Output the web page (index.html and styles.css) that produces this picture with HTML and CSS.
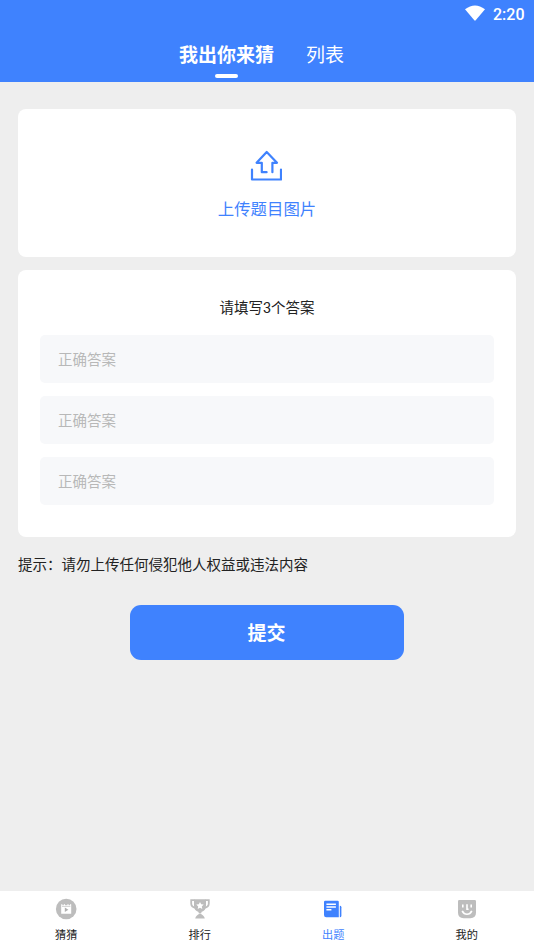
FILE: index.html
```html
<!DOCTYPE html>
<html lang="zh-CN">
<head>
<meta charset="utf-8">
<meta name="viewport" content="width=device-width, initial-scale=1">
<title>我出你来猜</title>
<link rel="stylesheet" href="styles.css">
</head>
<body>
<header class="header">
  <div class="status">
    <svg class="wifi" viewBox="0 0 20 16"><path d="M0 4.2Q10-3.4 20 4.2L10.7 15.3Q10 16 9.3 15.3Z" fill="#fff"/></svg>
    <span class="clock">2:20</span>
  </div>
  <nav class="tabs">
    <a class="tab tab-active">我出你来猜</a>
    <a class="tab">列表</a>
  </nav>
</header>
<main class="main">
  <section class="card upload">
    <svg class="upload-icon" viewBox="0 0 32 32" fill="none" stroke="#3f82fe" stroke-width="2.2" stroke-linecap="round" stroke-linejoin="round">
      <path d="M16.6 22.2h-4.8V12.8H6.6L16.7 2l10.3 10.8H22.4v9.4"/>
      <path d="M2 19.5v10h29v-10"/>
    </svg>
    <span class="upload-text">上传题目图片</span>
  </section>
  <section class="card answers">
    <h2 class="answers-title">请填写3个答案</h2>
    <input class="answer" type="text" placeholder="正确答案">
    <input class="answer" type="text" placeholder="正确答案">
    <input class="answer" type="text" placeholder="正确答案">
  </section>
  <p class="hint">提示：请勿上传任何侵犯他人权益或违法内容</p>
  <button class="submit">提交</button>
</main>
<footer class="tabbar">
  <a class="item">
    <svg class="icon" viewBox="0 0 22 22"><circle cx="11.2" cy="11" r="10.3" fill="#bdbdbd"/><path d="M6.2 6.2h1.2v1h1.4v-1H10v1h2.4v-1h1.2v1H15v-1h1.2v9.6h-10z" fill="#fff"/><path d="M7 8.4h8.4" stroke="#bdbdbd" stroke-width=".7"/><path d="M9.8 9.5v4.4l3.6-2.2z" fill="#b0b0b0"/></svg>
    <span>猜猜</span>
  </a>
  <a class="item">
    <svg class="icon" viewBox="0 0 22 22"><path d="M5.4 2.2H2.2v3.2q0 3.6 4.4 4.4M16.6 2.2h3.2v3.2q0 3.6-4.4 4.4" fill="none" stroke="#bdbdbd" stroke-width="1.8"/><path d="M5 1.2h12v6.3q0 5.2-4.6 6.4v1.4H9.6v-1.4Q5 12.7 5 7.5zM6.2 20.4q.6-2.6 4.8-4.8 4.2 2.2 4.8 4.8z" fill="#bdbdbd"/><path d="m11 4 1.2 2.2 2.5.4-1.9 1.8.5 2.5-2.3-1.2-2.3 1.2.5-2.5-1.9-1.8 2.5-.4z" fill="#fff"/></svg>
    <span>排行</span>
  </a>
  <a class="item item-active">
    <svg class="icon" viewBox="0 0 22 22"><path d="M3.2 2.8h12.4q1.2 0 1.2 1.2v15.2H4.2q-2.2 0-2.2-2.2V4q0-1.2 1.2-1.2z" fill="#3f82fe"/><path d="M17.8 7.8q1.6 0 1.6 1.4v8.5q0 1.5-1.6 1.5z" fill="#3f82fe"/><path d="M4.4 6.2h9.5M4.4 9h9.5M4.4 11.8h5" stroke="#fff" stroke-width="1.4"/></svg>
    <span>出题</span>
  </a>
  <a class="item">
    <svg class="icon" viewBox="0 0 22 22"><path d="M3.3 2h15.4q1.3 0 1.3 1.3v11.2q0 5.7-5.7 5.7H7.7Q2 20.2 2 14.5V3.3Q2 2 3.3 2z" fill="#bdbdbd"/><path d="M6.8 6.4v3M15.2 6.4v3M11 6.2v5h1.6M6.2 12.8q1.6 3.4 4.8 3.4t4.8-3.4" fill="none" stroke="#fff" stroke-width="1.6"/></svg>
    <span>我的</span>
  </a>
</footer>
</body>
</html>
```
FILE: styles.css
```css
* { box-sizing: border-box; }
body {
  margin: 0;
  height: 949px;
  display: flex;
  flex-direction: column;
  overflow: hidden;
  background: #eee;
  color: #222;
  font-family: Roboto, "Noto Sans CJK SC", sans-serif;
}
.header { height: 82px; background: #3f82fe; color: #fff; flex: none; }
.status {
  height: 28px;
  padding-right: 9.5px;
  display: flex;
  align-items: center;
  justify-content: flex-end;
  gap: 8px;
}
.wifi { width: 20px; height: 16px; margin-top: -2px; }
.clock { font-size: 16px; font-weight: 500; line-height: 28px; padding-top: 2px; }
.tabs {
  height: 54px;
  display: flex;
  justify-content: center;
  gap: 32px;
  padding-right: 11px;
}
.tab { position: relative; height: 54px; font-size: 19px; line-height: 56px; }
.tab-active { font-weight: 700; }
.tab-active::after {
  content: "";
  position: absolute;
  left: 36px;
  bottom: 4px;
  width: 23px;
  height: 4px;
  border-radius: 2px;
  background: #fff;
}
.main {
  flex: 1;
  padding: 27px 18px 0;
  display: flex;
  flex-direction: column;
}
.card { background: #fff; border-radius: 8px; }
.upload {
  height: 148px;
  padding-top: 41px;
  display: flex;
  flex-direction: column;
  align-items: center;
}
.upload-icon { width: 32px; height: 32px; margin-right: 2px; }
.upload-text { margin-top: 15px; font-size: 16.4px; line-height: 26px; color: #3f82fe; }
.answers {
  margin-top: 13px;
  height: 266.5px;
  padding: 27px 22px 0;
  display: flex;
  flex-direction: column;
  gap: 13.2px;
}
.answers-title {
  margin: 0 0 .8px;
  font-size: 14.5px;
  line-height: 24px;
  font-weight: 400;
  text-align: center;
}
.answer {
  width: 100%;
  height: 48px;
  flex: none;
  padding: 3px 18px 0;
  border: 0;
  border-radius: 5px;
  background: #f7f8fa;
  font: inherit;
  font-size: 14.5px;
  outline: none;
}
.answer::placeholder { color: #b8b8b8; opacity: 1; }
.hint { margin: 17.5px 0 0; font-size: 14.5px; line-height: 24px; }
.submit {
  align-self: center;
  width: 273.5px;
  height: 55px;
  margin-top: 27px;
  padding: 0 1px 2px 0;
  border: 0;
  border-radius: 11px;
  background: #3f82fe;
  color: #fff;
  font: inherit;
  font-size: 19px;
  font-weight: 700;
}
.tabbar {
  flex: none;
  height: 58px;
  background: #fff;
  display: grid;
  grid-template-columns: repeat(4, 1fr);
}
.item {
  padding: 7px 1px 0 0;
  display: flex;
  flex-direction: column;
  align-items: center;
  font-size: 11.2px;
  line-height: 16px;
}
.item-active { color: #3f82fe; }
.icon { width: 22px; height: 22px; margin-bottom: 7.5px; }
```
